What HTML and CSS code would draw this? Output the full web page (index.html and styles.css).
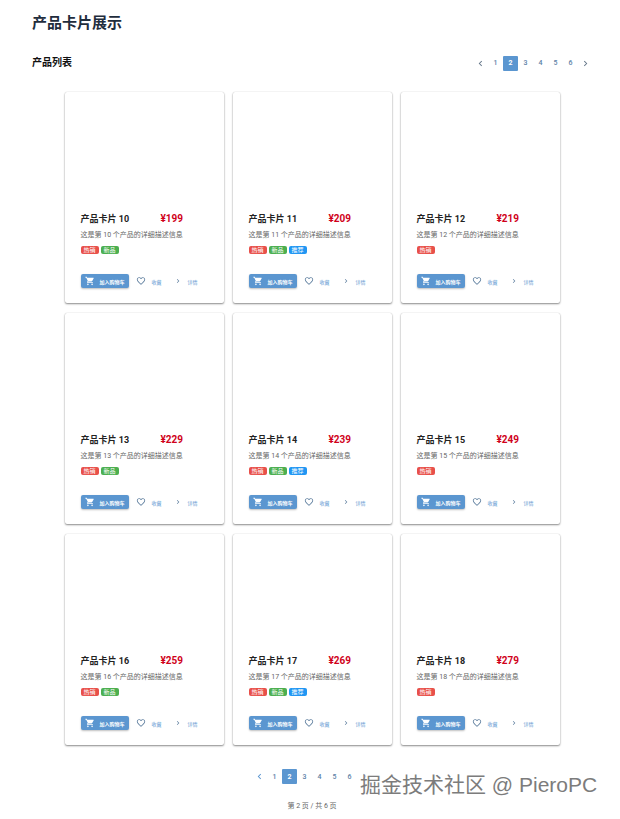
FILE: index.html
```html
<!DOCTYPE html>
<html lang="zh">
<head>
  <meta charset="UTF-8">
  <meta name="viewport" content="width=device-width, initial-scale=1.0">
  <title>产品卡片展示</title>
  <link rel="stylesheet" href="styles.css">
</head>
<body>
  <svg class="defs" width="0" height="0">
    <symbol id="i-cart" viewBox="0 0 24 24"><path d="M7 18c-1.1 0-2 .9-2 2s.9 2 2 2 2-.9 2-2-.9-2-2-2zM1 2v2h2l3.6 7.59-1.35 2.45C5.09 14.32 5 14.65 5 15c0 1.1.9 2 2 2h12v-2H7.42c-.14 0-.25-.11-.25-.25l.03-.12.9-1.63h7.45c.75 0 1.41-.41 1.75-1.03l3.58-6.49A1 1 0 0 0 20 4H5.21l-.94-2H1zm16 16c-1.1 0-2 .9-2 2s.9 2 2 2 2-.9 2-2-.9-2-2-2z"/></symbol>
    <symbol id="i-heart" viewBox="0 0 24 24"><path d="M16.5 3c-1.74 0-3.41.81-4.5 2.09C10.91 3.81 9.24 3 7.5 3 4.42 3 2 5.42 2 8.5c0 3.78 3.4 6.86 8.55 11.54L12 21.35l1.45-1.32C18.6 15.36 22 12.28 22 8.5 22 5.42 19.58 3 16.5 3zm-4.4 15.55l-.1.1-.1-.1C7.14 14.24 4 11.39 4 8.5 4 6.5 5.5 5 7.5 5c1.54 0 3.04.99 3.57 2.36h1.87C13.46 5.99 14.96 5 16.5 5c2 0 3.5 1.5 3.5 3.5 0 2.89-3.14 5.74-7.9 10.05z"/></symbol>
    <symbol id="i-right" viewBox="0 0 24 24"><path d="M10 6L8.59 7.41 13.17 12l-4.58 4.59L10 18l6-6z"/></symbol>
    <symbol id="i-left" viewBox="0 0 24 24"><path d="M15.41 7.41L14 6l-6 6 6 6 1.41-1.41L10.83 12z"/></symbol>
  </svg>

  <div class="page">
    <h1 class="page-title">产品卡片展示</h1>

    <div class="list-head">
      <h2 class="list-title">产品列表</h2>
      <div class="pager pager-top">
        <span class="pager-item pager-arrow"><svg><use href="#i-left"/></svg></span>
        <span class="pager-item">1</span>
        <span class="pager-item active">2</span>
        <span class="pager-item">3</span>
        <span class="pager-item">4</span>
        <span class="pager-item">5</span>
        <span class="pager-item">6</span>
        <span class="pager-item pager-arrow"><svg><use href="#i-right"/></svg></span>
      </div>
    </div>

    <div class="card-grid" id="grid"></div>

    <div class="pager pager-bottom">
      <span class="pager-item pager-arrow blue"><svg><use href="#i-left"/></svg></span>
      <span class="pager-item">1</span>
      <span class="pager-item active">2</span>
      <span class="pager-item">3</span>
      <span class="pager-item">4</span>
      <span class="pager-item">5</span>
      <span class="pager-item">6</span>
      <span class="pager-item pager-arrow blue"><svg><use href="#i-right"/></svg></span>
    </div>
    <p class="page-info">第 2 页 / 共 6 页</p>
  </div>

  <div class="watermark">掘金技术社区 @ PieroPC</div>

  <script>
    const grid = document.getElementById('grid');

    for (let i = 10; i <= 18; i++) {
      let tags = '<span class="tag tag-red">热销</span>';
      if (i % 3 !== 0) tags += '<span class="tag tag-green">新品</span>';
      if (i % 3 === 2) tags += '<span class="tag tag-blue">推荐</span>';

      grid.innerHTML += `
        <div class="card">
          <div class="card-title-row">
            <span class="card-title">产品卡片 ${i}</span>
            <span class="card-price">¥${199 + (i - 10) * 10}</span>
          </div>
          <p class="card-desc">这是第 ${i} 个产品的详细描述信息</p>
          <div class="card-tags">${tags}</div>
          <div class="card-actions">
            <span class="btn-cart"><svg><use href="#i-cart"/></svg>加入购物车</span>
            <span class="btn-link"><svg class="icon-heart"><use href="#i-heart"/></svg>收藏</span>
            <span class="btn-link"><svg class="icon-more"><use href="#i-right"/></svg>详情</span>
          </div>
        </div>`;
    }
  </script>
</body>
</html>
```

FILE: styles.css
```css
body {
  margin: 0;
  background-color: #fff;
  font-family: Roboto, "Noto Sans CJK SC", sans-serif;
  color: #1f2933;
}

.defs {
  position: absolute;
}

.page {
  padding: 14px 28px 0 32px;
}

.page-title {
  margin: 0;
  font-size: 15px;
  line-height: 18px;
  font-weight: 700;
  color: #1f2d3d;
}

.list-head {
  display: flex;
  justify-content: space-between;
  align-items: center;
  margin-top: 23px;
}

.list-title {
  margin: 0;
  font-size: 10px;
  line-height: 16px;
  font-weight: 700;
  color: #111;
}

.pager {
  display: flex;
  align-items: center;
}

.pager-top {
  margin-right: -1px;
}

.pager-item {
  width: 15px;
  height: 15px;
  display: flex;
  align-items: center;
  justify-content: center;
  font-size: 7px;
  font-weight: 500;
  color: #5b7fa6;
  border-radius: 1px;
}

.pager-item.active {
  background-color: #5b96d0;
  color: #fff;
  font-weight: 700;
}

.pager-arrow svg {
  width: 11px;
  height: 11px;
  fill: #66788a;
}

.pager-arrow.blue svg {
  fill: #5b96d0;
}

.card-grid {
  display: grid;
  grid-template-columns: repeat(3, 159px);
  gap: 10px 9px;
  justify-content: center;
  margin-top: 21px;
}

.card {
  box-sizing: border-box;
  height: 211px;
  padding: 120px 16px 0;
  background-color: #fff;
  border-radius: 2px;
  box-shadow: 0 1px 2px rgba(0, 0, 0, 0.45), 0 0 1px rgba(0, 0, 0, 0.2);
}

.card-title-row {
  display: grid;
  grid-template-columns: 80px auto;
  align-items: center;
  height: 13px;
}

.card-title {
  font-size: 9px;
  font-weight: 700;
  color: #222;
}

.card-price {
  font-size: 10px;
  font-weight: 700;
  color: #d0021b;
}

.card-desc {
  margin: 5px 0 0;
  font-size: 7px;
  line-height: 10px;
  color: #666;
}

.card-tags {
  display: flex;
  gap: 2px;
  margin-top: 6px;
}

.tag {
  width: 18px;
  height: 8px;
  border-radius: 2px;
  font-size: 6px;
  line-height: 8px;
  text-align: center;
  color: #fff;
}

.tag-red {
  background-color: #e8504a;
}

.tag-green {
  background-color: #4caf50;
}

.tag-blue {
  background-color: #2196f3;
}

.card-actions {
  display: flex;
  align-items: center;
  margin-top: 20px;
}

.btn-cart {
  width: 48px;
  height: 14px;
  display: flex;
  align-items: center;
  border-radius: 2px;
  background-color: #5b96d0;
  box-shadow: 0 1px 2px rgba(0, 0, 0, 0.25);
  color: #fff;
  font-size: 5px;
  font-weight: 700;
  white-space: nowrap;
}

.btn-cart svg {
  width: 10px;
  height: 10px;
  margin: 0 5px 0 4px;
  fill: #fff;
}

.btn-link {
  display: flex;
  align-items: center;
  color: #5b96d0;
  font-size: 5px;
  white-space: nowrap;
}

.icon-heart {
  width: 10px;
  height: 10px;
  margin: 0 6px 0 7px;
  fill: #5f7f9f;
}

.icon-more {
  width: 8px;
  height: 8px;
  margin: 0 6px 0 12px;
  fill: #5f7f9f;
}

.pager-bottom {
  justify-content: center;
  margin-top: 24px;
}

.page-info {
  margin: 17px 0 0;
  text-align: center;
  font-size: 7px;
  line-height: 10px;
  color: #666;
}

.watermark {
  position: absolute;
  left: 360px;
  top: 771px;
  font-family: "Liberation Sans", "Noto Sans CJK SC", sans-serif;
  font-size: 21px;
  line-height: 28px;
  white-space: nowrap;
  color: #7c7c7c;
  text-shadow: 1px 1px 1px #fff, -1px -1px 0 rgba(255, 255, 255, 0.6);
}
```
